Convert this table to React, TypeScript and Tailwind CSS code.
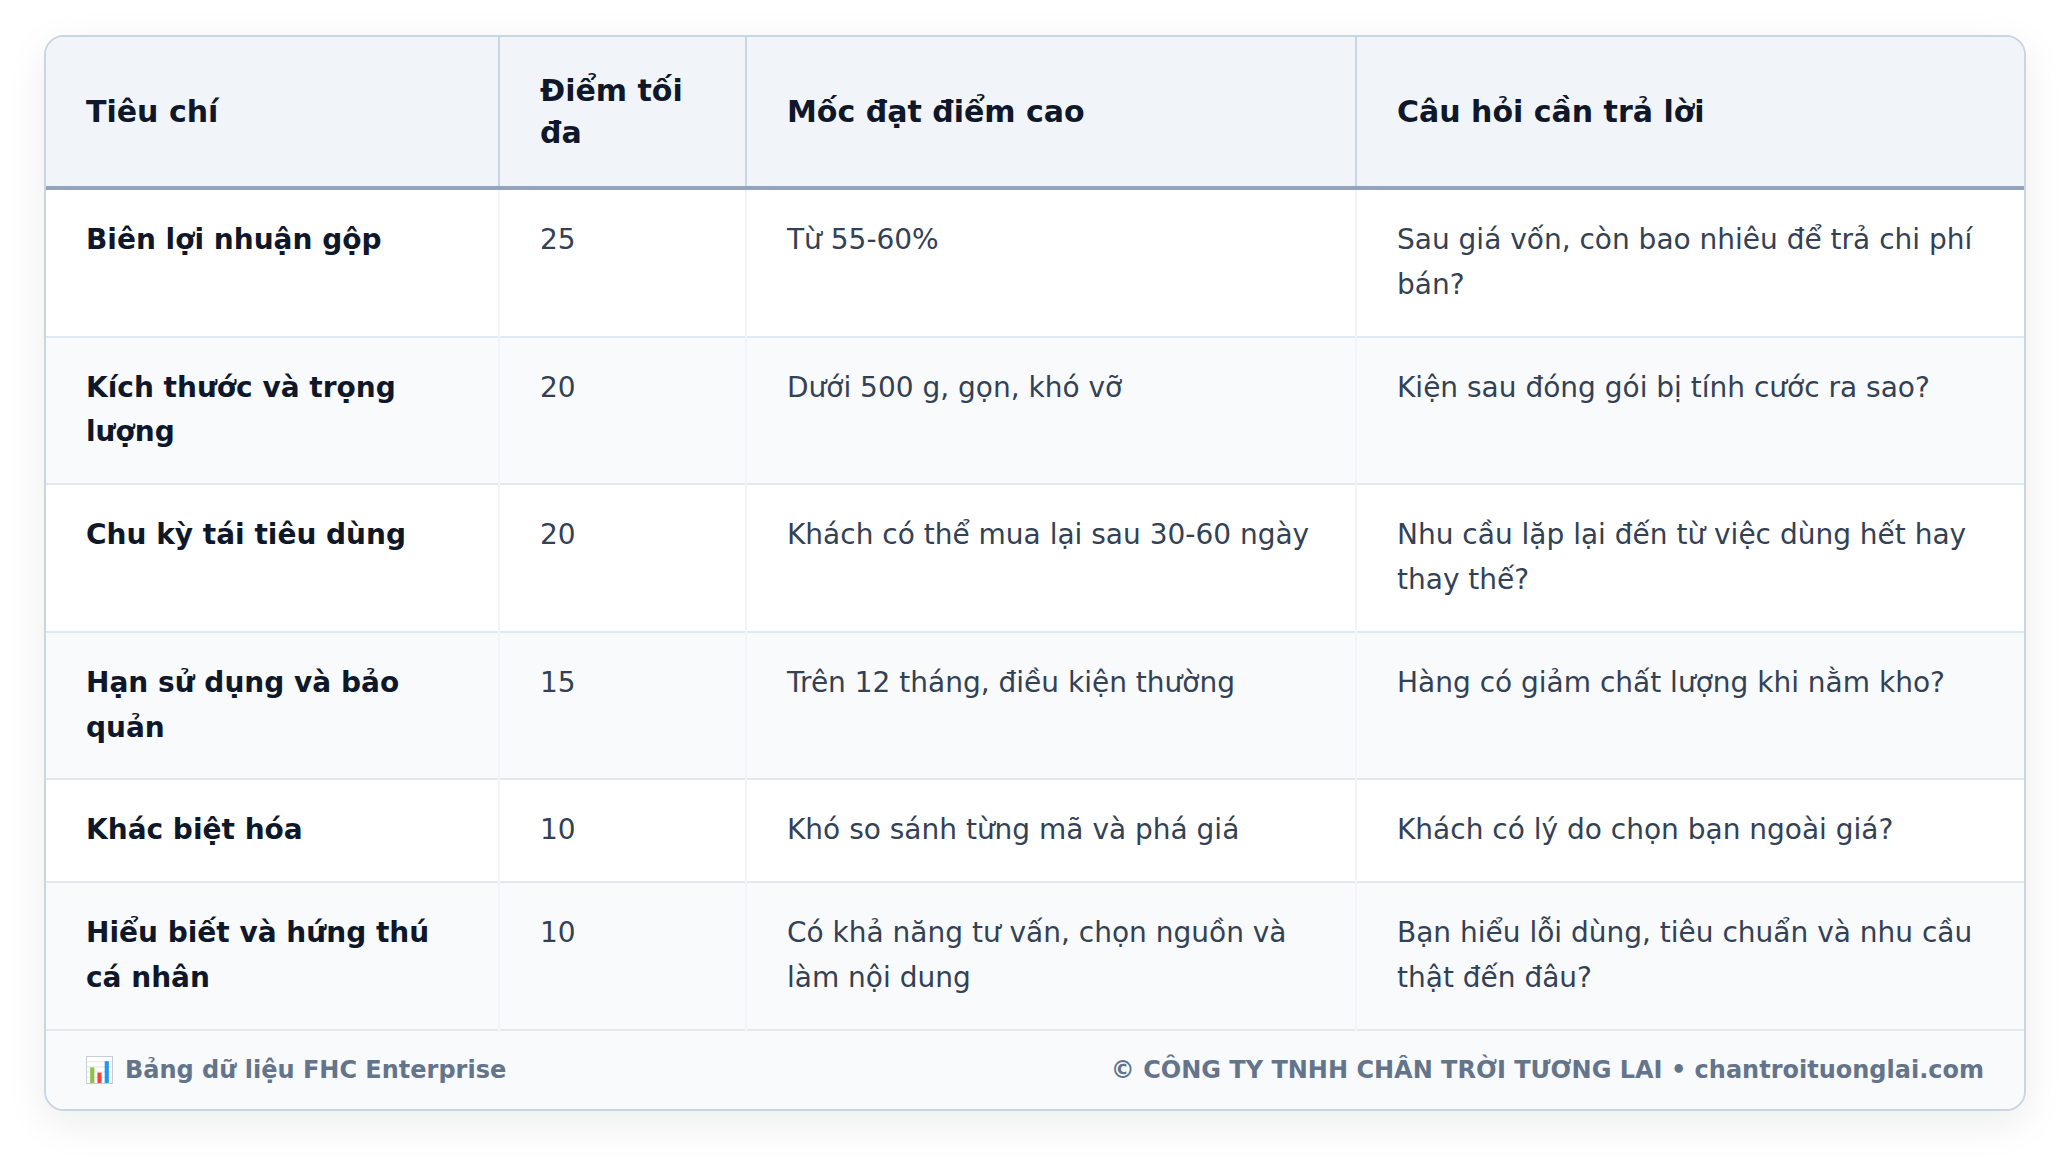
import React from "react";

interface Row {
  criterion: string;
  maxScore: number;
  milestone: string;
  question: string;
}

const rows: Row[] = [
  {
    criterion: "Biên lợi nhuận gộp",
    maxScore: 25,
    milestone: "Từ 55-60%",
    question: "Sau giá vốn, còn bao nhiêu để trả chi phí bán?",
  },
  {
    criterion: "Kích thước và trọng lượng",
    maxScore: 20,
    milestone: "Dưới 500 g, gọn, khó vỡ",
    question: "Kiện sau đóng gói bị tính cước ra sao?",
  },
  {
    criterion: "Chu kỳ tái tiêu dùng",
    maxScore: 20,
    milestone: "Khách có thể mua lại sau 30-60 ngày",
    question: "Nhu cầu lặp lại đến từ việc dùng hết hay thay thế?",
  },
  {
    criterion: "Hạn sử dụng và bảo quản",
    maxScore: 15,
    milestone: "Trên 12 tháng, điều kiện thường",
    question: "Hàng có giảm chất lượng khi nằm kho?",
  },
  {
    criterion: "Khác biệt hóa",
    maxScore: 10,
    milestone: "Khó so sánh từng mã và phá giá",
    question: "Khách có lý do chọn bạn ngoài giá?",
  },
  {
    criterion: "Hiểu biết và hứng thú cá nhân",
    maxScore: 10,
    milestone: "Có khả năng tư vấn, chọn nguồn và làm nội dung",
    question: "Bạn hiểu lỗi dùng, tiêu chuẩn và nhu cầu thật đến đâu?",
  },
];

// small bar chart glyph, stands in for the 📊 emoji
function ChartIcon() {
  return (
    <svg width="27" height="28" viewBox="0 0 26 27" className="inline-block shrink-0">
      <rect x="0.5" y="0.5" width="25" height="26" fill="#ffffff" stroke="#c9ced6" />
      <g stroke="#e3e6ea" strokeWidth="1">
        <line x1="1" y1="5.5" x2="25" y2="5.5" />
        <line x1="1" y1="10.5" x2="25" y2="10.5" />
        <line x1="1" y1="15.5" x2="25" y2="15.5" />
        <line x1="1" y1="20.5" x2="25" y2="20.5" />
      </g>
      <rect x="4" y="11" width="4" height="15" fill="#8bc34a" />
      <rect x="11" y="16" width="4" height="10" fill="#f44336" />
      <rect x="18" y="5" width="4" height="21" fill="#2196f3" />
    </svg>
  );
}

export default function App() {
  return (
    <div className="min-h-screen bg-white px-[44px] pt-[35px] font-['DejaVu_Sans',sans-serif]">
      <div className="overflow-hidden rounded-[20px] border-2 border-[#cbd5e1] bg-white shadow-[0_12px_40px_rgba(15,23,42,0.08)]">
        <table className="w-full table-fixed border-collapse">
          <colgroup>
            <col className="w-[453px]" />
            <col className="w-[247px]" />
            <col className="w-[610px]" />
            <col />
          </colgroup>
          <thead>
            <tr className="border-b-4 border-[#94a3b8] bg-[#f1f5f9]">
              {["Tiêu chí", "Điểm tối đa", "Mốc đạt điểm cao", "Câu hỏi cần trả lời"].map((h, i) => (
                <th
                  key={h}
                  className={
                    "px-10 pt-[33px] pb-[32px] text-left align-middle text-[30px] font-bold leading-[1.4] text-[#0f172a] " +
                    (i < 3 ? "border-r-2 border-[#cbd5e1]" : "")
                  }
                >
                  {h}
                </th>
              ))}
            </tr>
          </thead>
          <tbody>
            {rows.map((r, idx) => (
              <tr
                key={r.criterion}
                className={
                  "border-b-2 border-[#e2e8f0] " + (idx % 2 === 1 ? "bg-[#f8fafc]" : "bg-white")
                }
              >
                <td className="border-r-2 border-[#f1f5f9] px-10 py-7 align-top text-[28px] font-bold leading-[1.6] text-[#0f172a]">
                  {r.criterion}
                </td>
                <td className="border-r-2 border-[#f1f5f9] px-10 py-7 align-top text-[28px] leading-[1.6] text-[#334155]">
                  {r.maxScore}
                </td>
                <td className="border-r-2 border-[#f1f5f9] px-10 py-7 align-top text-[28px] leading-[1.6] text-[#334155]">
                  {r.milestone}
                </td>
                <td className="px-10 py-7 align-top text-[28px] leading-[1.6] text-[#334155]">
                  {r.question}
                </td>
              </tr>
            ))}
          </tbody>
        </table>

        {/* Footer */}
        <div className="flex items-center justify-between bg-[#f8fafc] px-10 py-[21px] text-[24px] font-bold leading-[1.5] text-[#64748b]">
          <div className="flex items-center gap-[12px]">
            <ChartIcon />
            <span>Bảng dữ liệu FHC Enterprise</span>
          </div>
          <span>© CÔNG TY TNHH CHÂN TRỜI TƯƠNG LAI • chantroituonglai.com</span>
        </div>
      </div>
    </div>
  );
}
